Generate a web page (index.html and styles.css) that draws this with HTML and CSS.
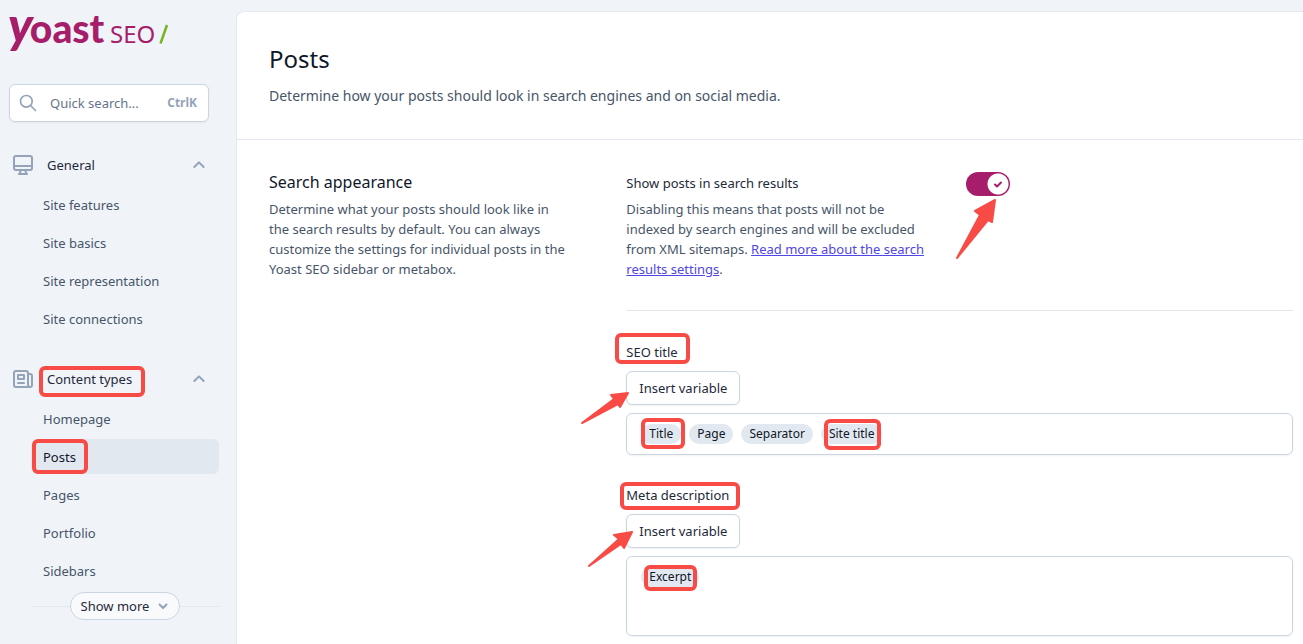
FILE: index.html
```html
<!DOCTYPE html>
<html lang="en">
<head>
  <meta charset="UTF-8">
  <meta name="viewport" content="width=device-width, initial-scale=1.0">
  <title>Posts - Yoast SEO</title>
  <link rel="stylesheet" href="styles.css">
</head>
<body>
  <aside class="sidebar">
    <svg class="logo" width="164" height="48" viewBox="0 0 164 48" role="img" aria-label="Yoast SEO">
      <text x="-1" y="35"><tspan class="logo-y">y</tspan><tspan class="logo-name" dx="-3">oast</tspan></text>
      <text class="logo-seo" x="101" y="35">SEO</text>
      <path d="M151.500 35.500 L158 17" stroke="#77b227" stroke-width="2.500"/>
    </svg>

    <label class="search">
      <svg width="20" height="20" viewBox="0 0 24 24"><path d="M21 21l-6-6m2-5a7 7 0 11-14 0 7 7 0 0114 0z"/></svg>
      <input type="text" placeholder="Quick search..." aria-label="Quick search">
      <kbd>CtrlK</kbd>
    </label>

    <nav>
      <section class="group">
        <button class="group-head" type="button">
          <svg class="group-icon" width="24" height="24" viewBox="0 0 24 24"><path d="M9.750 17L9 20l-1 1h8l-1-1-.75-3M3 13h18M5 17h14a2 2 0 002-2V5a2 2 0 00-2-2H5a2 2 0 00-2 2v10a2 2 0 002 2z"/></svg>
          <span>General</span>
          <svg class="chevron" width="16" height="16" viewBox="0 0 24 24"><path d="M5 15l7-7 7 7"/></svg>
        </button>
        <ul>
          <li><a href="#">Site features</a></li>
          <li><a href="#">Site basics</a></li>
          <li><a href="#">Site representation</a></li>
          <li><a href="#">Site connections</a></li>
        </ul>
      </section>

      <section class="group">
        <button class="group-head" type="button">
          <svg class="group-icon" width="24" height="24" viewBox="0 0 24 24"><path d="M19 20H5a2 2 0 01-2-2V6a2 2 0 012-2h10a2 2 0 012 2v1m2 13a2 2 0 01-2-2V7m2 13a2 2 0 002-2V9a2 2 0 00-2-2h-2m-4-3H9M7 16h6M7 8h6v4H7V8z"/></svg>
          <span class="mark mark-types">Content types</span>
          <svg class="chevron" width="16" height="16" viewBox="0 0 24 24"><path d="M5 15l7-7 7 7"/></svg>
        </button>
        <ul>
          <li><a href="#">Homepage</a></li>
          <li><a href="#" class="active"><span class="mark mark-posts">Posts</span></a></li>
          <li><a href="#">Pages</a></li>
          <li><a href="#">Portfolio</a></li>
          <li><a href="#">Sidebars</a></li>
        </ul>
        <div class="more">
          <button type="button">Show more
            <svg class="chevron" width="12" height="12" viewBox="0 0 24 24"><path d="M5 9l7 7 7-7"/></svg>
          </button>
        </div>
      </section>
    </nav>
  </aside>

  <main>
    <header>
      <h1>Posts</h1>
      <p>Determine how your posts should look in search engines and on social media.</p>
    </header>

    <div class="settings">
      <div class="intro">
        <h2>Search appearance</h2>
        <p>Determine what your posts should look like in the search results by default. You can always customize the settings for individual posts in the Yoast SEO sidebar or metabox.</p>
      </div>

      <div class="fields">
        <div class="toggle-row">
          <div class="toggle-text">
            <label for="showPosts">Show posts in search results</label>
            <p>Disabling this means that posts will not be indexed by search engines and will be excluded from XML sitemaps. <a href="#">Read more about the search results settings</a>.</p>
          </div>
          <div class="toggle">
            <input id="showPosts" type="checkbox" role="switch" checked>
            <svg class="check" width="12" height="12" viewBox="0 0 12 12"><path d="M3 6.500l2 2 4-4"/></svg>
            <svg class="arrow arrow-toggle" width="46" height="66" viewBox="0 0 46 66"><path d="M41 4L21 15l5 4L3 62 34 24l4 2z"/></svg>
          </div>
        </div>

        <hr>

        <div class="field">
          <label id="seoTitle"><span class="mark mark-seo">SEO title</span></label>
          <button class="insert" type="button">Insert variable
            <svg class="arrow arrow-title" width="54" height="38" viewBox="0 0 54 38"><path d="M50 4L33 6l3 4L4 34l36-19 2 3z"/></svg>
          </button>
          <div class="editor" contenteditable="true" role="textbox" aria-labelledby="seoTitle">
            <span class="chip mark mark-title">Title</span>
            <span class="chip">Page</span>
            <span class="chip">Separator</span>
            <span class="chip mark mark-site">Site title</span>
          </div>
        </div>

        <div class="field">
          <label id="metaDesc"><span class="mark mark-meta">Meta description</span></label>
          <button class="insert" type="button">Insert variable
            <svg class="arrow arrow-meta" width="50" height="40" viewBox="0 0 50 40"><path d="M46 3L28 6l5 4L3 37l32-22 3 4z"/></svg>
          </button>
          <div class="editor editor-tall" contenteditable="true" role="textbox" aria-multiline="true" aria-labelledby="metaDesc">
            <span class="chip mark mark-excerpt">Excerpt</span>
          </div>
        </div>
      </div>
    </div>
  </main>
</body>
</html>
```
FILE: styles.css
```css
* {
  box-sizing: border-box;
}
body {
  margin: 0;
  min-height: 100vh;
  display: flex;
  background-color: #f0f4f9;
  color: #1e293b;
  font-family: "Noto Sans", "Open Sans", sans-serif;
  font-size: 13px;
  line-height: 20px;
}
h1, h2, p, ul {
  margin: 0;
  padding: 0;
  font-weight: normal;
}
button, input, kbd {
  font: inherit;
}
button {
  color: #1e293b;
  cursor: pointer;
}
svg {
  fill: none;
}

/* sidebar */
.sidebar {
  flex: 0 0 236px;
  min-width: 0;
  padding: 8px 17px 24px 9px;
}
.logo {
  display: block;
  overflow: visible;
}
.logo text {
  fill: #a61e69;
}
.logo-y,
.logo-name {
  font-family: Lato, sans-serif;
  font-size: 39px;
  font-weight: 900;
}
.logo-y {
  font-size: 50px;
  font-style: italic;
}
.logo-seo {
  font-size: 24px;
}
.search {
  display: flex;
  align-items: center;
  height: 38px;
  margin: 28px 10px 27px 0;
  padding: 0 11px 0 8px;
  background-color: #fff;
  border: 1px solid #cbd5e1;
  border-radius: 6px;
  box-shadow: 0 1px 2px rgba(0, 0, 0, 0.05);
}
.search svg,
.group-icon,
.chevron {
  flex: none;
  stroke: #94a3b8;
  stroke-width: 2;
  stroke-linecap: round;
  stroke-linejoin: round;
}
.search input {
  flex: 1;
  width: 100%;
  min-width: 0;
  margin-left: 12px;
  padding: 0;
  border: none;
  outline: none;
  background: none;
}
.search input::placeholder {
  color: #64748b;
}
.search kbd {
  color: #94a3b8;
  font-size: 12px;
  font-weight: 700;
}
.group + .group {
  margin-top: 27px;
}
.group-head {
  display: flex;
  align-items: center;
  width: 100%;
  height: 32px;
  padding: 0 12px 0 2px;
  border: none;
  background: none;
}
.group-head > span {
  margin-left: 12px;
}
.group-head .chevron {
  margin-left: auto;
  stroke-width: 3;
}
.group ul {
  display: flex;
  flex-direction: column;
  gap: 3px;
  margin: 6px 0 0 22px;
  list-style: none;
}
.group li a {
  display: flex;
  align-items: center;
  height: 35px;
  padding: 0 12px;
  border-radius: 6px;
  color: #475569;
  text-decoration: none;
}
.group li a.active {
  background-color: #e2e8f0;
  color: #0f172a;
}
.more {
  display: flex;
  align-items: center;
  margin: 4px 0 0 22px;
}
.more::before,
.more::after {
  content: "";
  flex: 1;
  height: 1px;
  background-color: #e2e8f0;
}
.more button {
  display: flex;
  align-items: center;
  gap: 8px;
  height: 28px;
  padding: 0 10px;
  border: 1px solid #cbd5e1;
  border-radius: 14px;
  background-color: #f8fafc;
}
.more .chevron {
  stroke-width: 4;
}

/* content */
main {
  flex: 1;
  min-width: 0;
  margin-top: 11px;
  background-color: #fff;
  border: solid #e5e9f0;
  border-width: 1px 0 0 1px;
  border-top-left-radius: 8px;
}
header {
  padding: 32px 32px 33px;
  border-bottom: 1px solid #e2e8f0;
}
h1 {
  color: #0f172a;
  font-size: 24px;
  line-height: 30px;
}
header p {
  margin-top: 12px;
  color: #475569;
  font-size: 14px;
}
.settings {
  display: grid;
  grid-template-columns: 1fr 2fr;
  gap: 24px;
  padding: 32px 10px 8px 32px;
}
h2 {
  color: #0f172a;
  font-size: 16px;
}
.intro p {
  max-width: 302px;
  margin-top: 7px;
  color: #475569;
}
.toggle-row {
  display: flex;
  justify-content: space-between;
  max-width: 384px;
}
.toggle-text {
  max-width: 308px;
}
.toggle-text label {
  display: block;
  line-height: 22px;
}
.toggle-text p {
  margin-top: 5px;
  color: #475569;
}
.toggle-text a {
  color: #4f46e5;
}
.toggle {
  position: relative;
  flex: none;
  width: 44px;
  height: 24px;
}
.toggle input {
  appearance: none;
  display: block;
  width: 44px;
  height: 24px;
  margin: 0;
  border-radius: 12px;
  background: radial-gradient(circle at 32px 12px, #fff 10px, #a61e69 11px);
  cursor: pointer;
}
.check {
  position: absolute;
  top: 6px;
  left: 26px;
  stroke: #a61e69;
  stroke-width: 2;
  stroke-linecap: round;
  stroke-linejoin: round;
  pointer-events: none;
}
hr {
  height: 1px;
  margin: 31px 0;
  border: none;
  background-color: #e5e7eb;
}
.field + .field {
  margin-top: 30px;
}
.field label {
  display: block;
  line-height: 21px;
}
.insert {
  position: relative;
  display: block;
  height: 34px;
  margin: 8px 0;
  padding: 0 12px;
  border: 1px solid #cbd5e1;
  border-radius: 6px;
  background-color: #fff;
  box-shadow: 0 1px 2px rgba(0, 0, 0, 0.05);
}
.editor {
  display: flex;
  align-items: flex-start;
  gap: 8px;
  min-height: 42px;
  padding: 10px 14px;
  border: 1px solid #cbd5e1;
  border-radius: 6px;
  box-shadow: 0 1px 2px rgba(0, 0, 0, 0.05);
}
.editor-tall {
  min-height: 80px;
}
.chip {
  height: 20px;
  padding: 0 8px;
  border-radius: 10px;
  background-color: #e2e8f0;
  color: #0f172a;
  font-size: 12px;
}

/* red callouts */
.mark {
  position: relative;
}
.mark::after {
  content: "";
  position: absolute;
  border: 4px solid #f94b46;
  border-radius: 6px;
  pointer-events: none;
}
.mark-types::after {
  inset: -3px -13px -8px -8px;
}
.mark-posts::after {
  inset: -8px -12px -7px -11px;
}
.mark-seo::after {
  inset: -10px -12px -3px -11px;
}
.mark-meta::after {
  inset: -4px -11px -6px -6px;
}
.mark-title::after {
  inset: -6px -4px -5px 0;
}
.mark-site::after {
  inset: -5px 1px -6px 3px;
}
.mark-excerpt::after {
  inset: -2px 2px -4px 3px;
}
.arrow {
  position: absolute;
  z-index: 1;
  pointer-events: none;
}
.arrow path {
  fill: #f94b46;
  stroke: #f94b46;
  stroke-width: 2;
  stroke-linejoin: round;
}
.arrow-toggle {
  top: 24px;
  left: -12px;
}
.arrow-title {
  top: 17px;
  left: -49px;
}
.arrow-meta {
  top: 14px;
  left: -41px;
}
```
